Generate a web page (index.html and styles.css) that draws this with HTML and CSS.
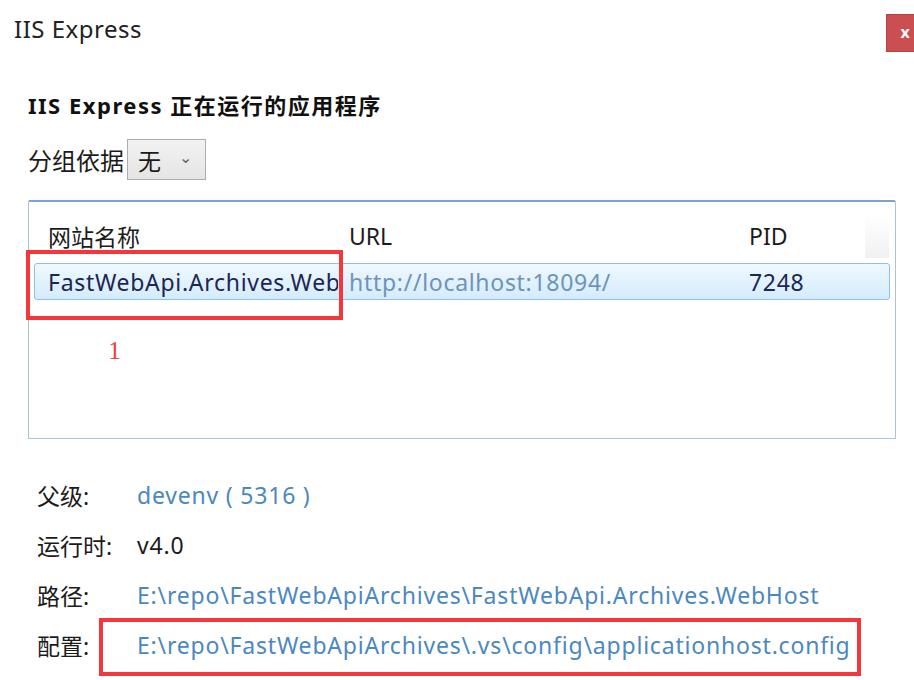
FILE: index.html
```html
<!DOCTYPE html>
<html lang="zh-CN">
<head>
<meta charset="utf-8">
<title>IIS Express</title>
<link rel="stylesheet" href="styles.css">
</head>
<body>
<div class="window">
  <div class="titlebar">
    <span class="title">IIS Express</span>
    <span class="close">x</span>
  </div>
  <div class="content">
    <h1 class="heading">IIS Express 正在运行的应用程序</h1>
    <div class="group">
      <span class="group-label">分组依据</span>
      <span class="combo"><span class="combo-text">无</span><span class="combo-arrow">⌄</span></span>
    </div>
    <div class="listbox">
      <div class="list-header">
        <span class="col col-name">网站名称</span>
        <span class="col col-url">URL</span>
        <span class="col col-pid">PID</span>
        <span class="header-filler"></span>
      </div>
      <div class="list-row">
        <span class="col col-name cell-name">FastWebApi.Archives.WebHost</span>
        <span class="col col-url cell-url">http://localhost:18094/</span>
        <span class="col col-pid cell-pid">7248</span>
      </div>
      <div class="mark mark-row"></div>
      <span class="mark-num">1</span>
    </div>
    <div class="details">
      <div class="detail"><span class="label">父级:</span><span class="value link">devenv ( 5316 )</span></div>
      <div class="detail"><span class="label">运行时:</span><span class="value">v4.0</span></div>
      <div class="detail"><span class="label">路径:</span><span class="value link">E:\repo\FastWebApiArchives\FastWebApi.Archives.WebHost</span></div>
      <div class="detail detail-config"><span class="label">配置:</span><span class="value link">E:\repo\FastWebApiArchives\.vs\config\applicationhost.config</span><div class="mark mark-config"></div></div>
    </div>
  </div>
</div>
</body>
</html>
```

FILE: styles.css
```css
html, body {
  margin: 0;
  padding: 0;
  background: #ffffff;
}
body {
  width: 914px;
  height: 680px;
  overflow: hidden;
  font-family: "Noto Sans", "Noto Sans CJK SC", sans-serif;
  color: #1b1b1b;
}
.window {
  display: flex;
  flex-direction: column;
  width: 914px;
}
.titlebar {
  display: flex;
  justify-content: space-between;
  align-items: flex-start;
  height: 66px;
}
.title {
  margin: 13px 0 0 14px;
  font-size: 24px;
  letter-spacing: 0.5px;
  line-height: 32px;
  color: #222;
}
.close {
  margin-top: 14px;
  width: 38px;
  height: 38px;
  margin-right: -10px;
  background: #c94f50;
  border: 1px solid #b84142;
  box-sizing: border-box;
  color: #fff;
  font-weight: bold;
  font-size: 16px;
  line-height: 34px;
  text-align: center;
}
.content {
  padding-left: 28px;
  display: flex;
  flex-direction: column;
}
.heading {
  margin: 23px 0 0 0;
  font-size: 22px;
  letter-spacing: 1.5px;
  line-height: 32px;
  font-weight: bold;
  color: #111;
}
.group {
  display: flex;
  align-items: center;
  margin-top: 18px;
}
.group-label {
  font-size: 24px;
}
.combo {
  margin-left: 3px;
  width: 79px;
  height: 41px;
  box-sizing: border-box;
  border: 1px solid #acacac;
  background: linear-gradient(#f2f2f2, #e5e5e5);
  display: flex;
  align-items: center;
  padding-left: 10px;
}
.combo-text {
  font-size: 23px;
}
.combo-arrow {
  margin-left: 18px;
  color: #666;
  font-size: 16px;
  line-height: 10px;
  margin-top: -6px;
}
.listbox {
  position: relative;
  margin-top: 20px;
  width: 868px;
  height: 239px;
  box-sizing: border-box;
  border: 1px solid #a9c1da;
  border-top: 2px solid #7ea3c8;
  border-radius: 2px 2px 0 0;
}
.list-header {
  display: flex;
  align-items: center;
  height: 56px;
  padding-top: 11px;
  box-sizing: border-box;
  position: relative;
  font-size: 23px;
}
.header-filler {
  position: absolute;
  right: 6px;
  top: 12px;
  width: 24px;
  height: 44px;
  background: linear-gradient(#ffffff, #f1f1f1);
}
.col {
  display: block;
  white-space: nowrap;
  overflow: hidden;
}
.col-name {
  width: 290px;
  padding-left: 19px;
  box-sizing: content-box;
}
.col-url {
  width: 400px;
  padding-left: 11px;
}
.col-pid {
  width: 100px;
}
.list-row {
  display: flex;
  align-items: center;
  margin: 5px 5px 0 5px;
  height: 37px;
  box-sizing: border-box;
  border: 1px solid #8ec0ea;
  border-radius: 3px;
  background: linear-gradient(#f0f8fe, #d3ecfc);
  font-size: 23px;
  letter-spacing: 0.7px;
}
.list-row .col-name {
  padding-left: 13px;
  width: 290px;
}
.cell-name {
  color: #1c2654;
  text-overflow: clip;
}
.cell-url {
  color: #6f93b6;
}
.cell-pid {
  color: #1c2654;
}
.mark {
  position: absolute;
  border: 4px solid #f5363b;
  box-sizing: border-box;
  pointer-events: none;
}
.mark-row {
  left: -3px;
  top: 48px;
  width: 317px;
  height: 70px;
}
.mark-num {
  position: absolute;
  left: 79px;
  top: 134px;
  font-family: "Liberation Serif", serif;
  font-size: 26px;
  color: #ef3f3f;
}
.details {
  display: flex;
  flex-direction: column;
  margin-top: 31px;
  padding-left: 9px;
}
.detail {
  position: relative;
  display: flex;
  align-items: center;
  height: 50px;
  font-size: 23px;
}
.label {
  width: 100px;
  color: #1b1b1b;
}
.value {
  white-space: nowrap;
  letter-spacing: 0.8px;
}
.link {
  color: #4a88bf;
}
.mark-config {
  left: 62px;
  top: -2px;
  width: 762px;
  height: 58px;
}
```
